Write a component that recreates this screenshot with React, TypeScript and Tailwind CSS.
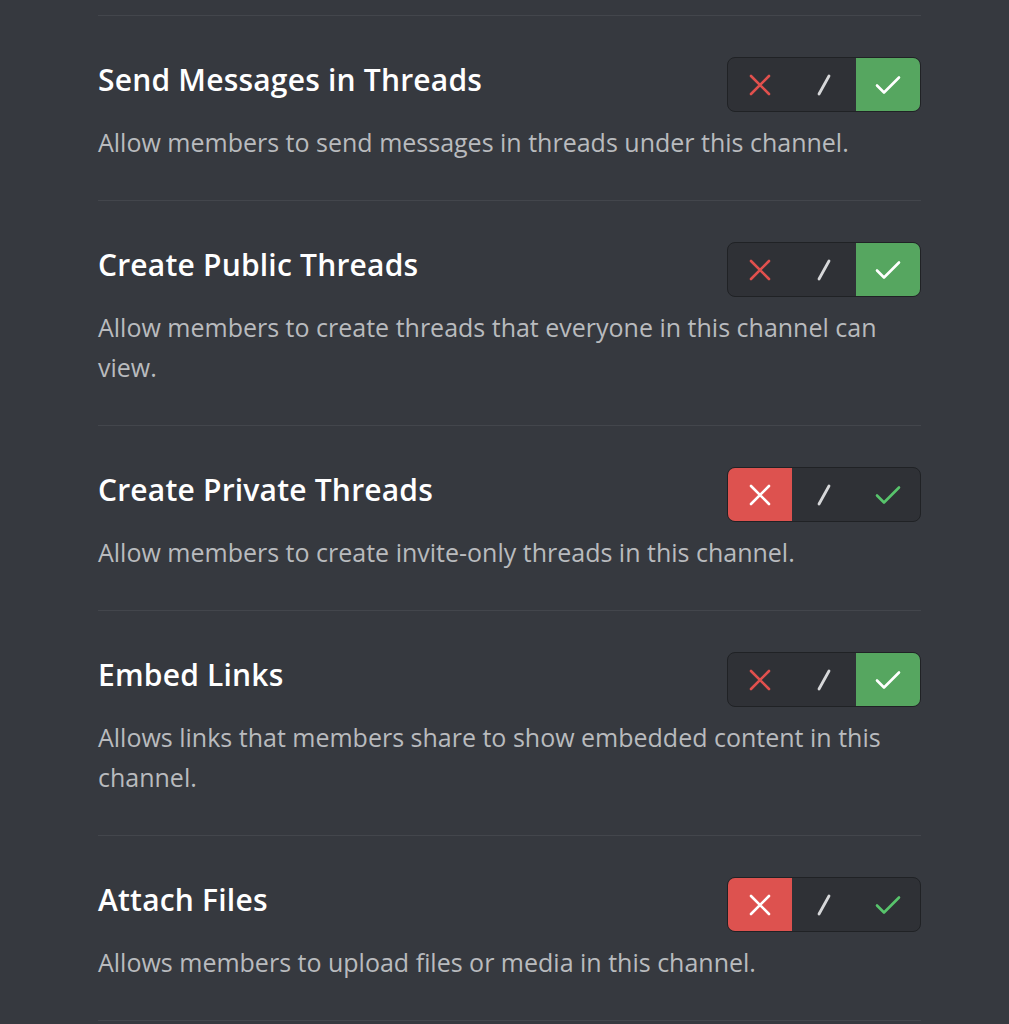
import React from "react";

type State = "deny" | "neutral" | "allow";

type Permission = {
  title: string;
  description: string;
  state: State;
};

const permissions: Permission[] = [
  {
    title: "Send Messages in Threads",
    description: "Allow members to send messages in threads under this channel.",
    state: "allow",
  },
  {
    title: "Create Public Threads",
    description: "Allow members to create threads that everyone in this channel can view.",
    state: "allow",
  },
  {
    title: "Create Private Threads",
    description: "Allow members to create invite-only threads in this channel.",
    state: "deny",
  },
  {
    title: "Embed Links",
    description: "Allows links that members share to show embedded content in this channel.",
    state: "allow",
  },
  {
    title: "Attach Files",
    description: "Allows members to upload files or media in this channel.",
    state: "deny",
  },
];

function Cross({ active }: { active: boolean }) {
  return (
    <svg width="22" height="22" viewBox="0 0 22 22" fill="none">
      <path
        d="M2 2L20 20M20 2L2 20"
        stroke={active ? "#ffffff" : "#e0504d"}
        strokeWidth="2.6"
        strokeLinecap="round"
      />
    </svg>
  );
}

function Slash() {
  return (
    <svg width="18" height="24" viewBox="0 0 18 24" fill="none">
      <path d="M4 21L14 3" stroke="#d6d7d9" strokeWidth="2.8" strokeLinecap="round" />
    </svg>
  );
}

function Check({ active }: { active: boolean }) {
  return (
    <svg width="26" height="20" viewBox="0 0 26 20" fill="none">
      <path
        d="M2 10.5L9 17.5L24 2.5"
        stroke={active ? "#ffffff" : "#58c46c"}
        strokeWidth="2.6"
        strokeLinecap="round"
        strokeLinejoin="round"
      />
    </svg>
  );
}

function TriToggle({ state }: { state: State }) {
  return (
    <div className="flex h-[55px] w-[194px] shrink-0 overflow-hidden rounded-[8px] border border-[#202225] bg-[#2f3136]">
      <div className={`flex w-[64px] items-center justify-center ${state === "deny" ? "bg-[#dd524f]" : ""}`}>
        <Cross active={state === "deny"} />
      </div>
      <div className={`flex w-[64px] items-center justify-center ${state === "neutral" ? "bg-[#4f545c]" : ""}`}>
        <Slash />
      </div>
      <div className={`flex w-[64px] items-center justify-center ${state === "allow" ? "bg-[#56a660]" : ""}`}>
        <Check active={state === "allow"} />
      </div>
    </div>
  );
}

export default function App() {
  return (
    <div className="min-h-screen bg-[#36393f] pt-[15px] font-['Open_Sans','Noto_Sans',sans-serif]">
      <div className="ml-[98px] w-[823px]">
        {permissions.map((p) => (
          <div key={p.title} className="border-t border-[#43464c] pb-[38px] pt-[41px]">
            <div className="flex items-start justify-between">
              <div className="text-[30px] font-semibold leading-[46px] tracking-[0.2px] text-white">{p.title}</div>
              <TriToggle state={p.state} />
            </div>
            <p className="mt-[10px] max-w-[790px] text-[25px] leading-[40px] text-[#b9bbbe]">{p.description}</p>
          </div>
        ))}
        <div className="border-t border-[#43464c]" />
      </div>
    </div>
  );
}
